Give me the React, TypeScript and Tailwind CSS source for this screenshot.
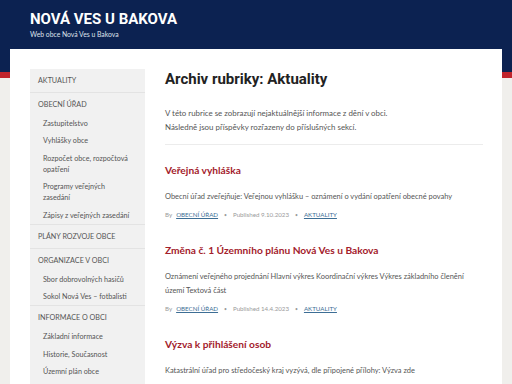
const menu = [
  { label: 'AKTUALITY', items: [] as string[] },
  {
    label: 'OBECNÍ ÚŘAD',
    items: [
      'Zastupitelstvo',
      'Vyhlášky obce',
      'Rozpočet obce, rozpočtová opatření',
      'Programy veřejných zasedání',
      'Zápisy z veřejných zasedání',
    ],
  },
  { label: 'PLÁNY ROZVOJE OBCE', items: [] as string[] },
  {
    label: 'ORGANIZACE V OBCI',
    items: ['Sbor dobrovolných hasičů', 'Sokol Nová Ves – fotbalisti'],
  },
  {
    label: 'INFORMACE O OBCI',
    items: ['Základní informace', 'Historie, Současnost', 'Územní plán obce', 'Kontakty'],
  },
]

const posts = [
  {
    title: 'Veřejná vyhláška',
    excerpt: 'Obecní úřad zveřejňuje: Veřejnou vyhlášku – oznámení o vydání opatření obecné povahy',
    date: '9.10.2023',
  },
  {
    title: 'Změna č. 1 Územního plánu Nová Ves u Bakova',
    excerpt:
      'Oznámení veřejného projednání Hlavní výkres Koordinační výkres Výkres základního členění území Textová část',
    date: '14.4.2023',
  },
  {
    title: 'Výzva k přihlášení osob',
    excerpt: 'Katastrální úřad pro středočeský kraj vyzývá, dle připojené přílohy: Výzva zde',
    date: '2.3.2023',
  },
]

export default function App() {
  return (
    <div className="w-[512px] h-[384px] overflow-hidden bg-[linear-gradient(to_bottom,#0c2251_0px,#0c2251_72px,#c0242c_72px,#c0242c_78px,#f0efec_78px)] font-['Lato',sans-serif]">
      {/* Header */}
      <header className="h-[49px] px-[30px] pt-[10px]">
        <div className="font-['Roboto',sans-serif] font-bold text-[15px] leading-[19px] text-white">
          NOVÁ VES U BAKOVA
        </div>
        <div className="mt-[1px] text-[6.8px] leading-[8px] text-[#dfe3ec]">Web obce Nová Ves u Bakova</div>
      </header>

      {/* Page */}
      <div className="mx-[10px] bg-white flex pl-[20px] pr-[19px] pt-[20px] h-[400px]">
        {/* Sidebar */}
        <aside className="w-[115px] shrink-0 bg-[#f1f1f1] self-start">
          {menu.map((group) => (
            <div key={group.label} className="border-b border-[#e3e3e3]">
              <div className="px-[8px] py-[6px] text-[7.2px] leading-[11px] text-[#555]">{group.label}</div>
              {group.items.length > 0 && (
                <div className="-mt-[1px]">
                  {group.items.map((item) => (
                    <div key={item} className="pl-[13px] pr-[15px] py-[3px] text-[7.2px] leading-[11.25px] text-[#555]">
                      {item}
                    </div>
                  ))}
                </div>
              )}
            </div>
          ))}
        </aside>

        {/* Main */}
        <main className="ml-[20px] flex-1">
          <h1 className="font-['Roboto',sans-serif] font-bold text-[15px] leading-[20px] text-[#222]">
            Archiv rubriky: Aktuality
          </h1>
          <div className="mt-[17px] text-[7.9px] leading-[14px] text-[#555] pb-[10px] border-b border-[#ececec]">
            <p>V této rubrice se zobrazují nejaktuálnější informace z dění v obci.</p>
            <p>Následně jsou příspěvky rozřazeny do příslušných sekcí.</p>
          </div>

          {posts.map((post) => (
            <article key={post.title} className="pt-[19px] pb-[5px]">
              <h2 className="font-bold text-[10.2px] leading-[13px] text-[#a3202b]">{post.title}</h2>
              <p className="mt-[12.5px] text-[7.45px] leading-[14px] text-[#555]">{post.excerpt}</p>
              <div className="mt-[6.5px] flex items-center gap-[4px] text-[6.2px] leading-[10px] text-[#9a9a9a]">
                <span>By</span>
                <span className="text-[#3d6e95] underline">OBECNÍ ÚŘAD</span>
                <span className="mx-[2px] text-[5px]">•</span>
                <span>Published {post.date}</span>
                <span className="mx-[2px] text-[5px]">•</span>
                <span className="text-[#3d6e95] underline">AKTUALITY</span>
              </div>
            </article>
          ))}
        </main>
      </div>
    </div>
  )
}
